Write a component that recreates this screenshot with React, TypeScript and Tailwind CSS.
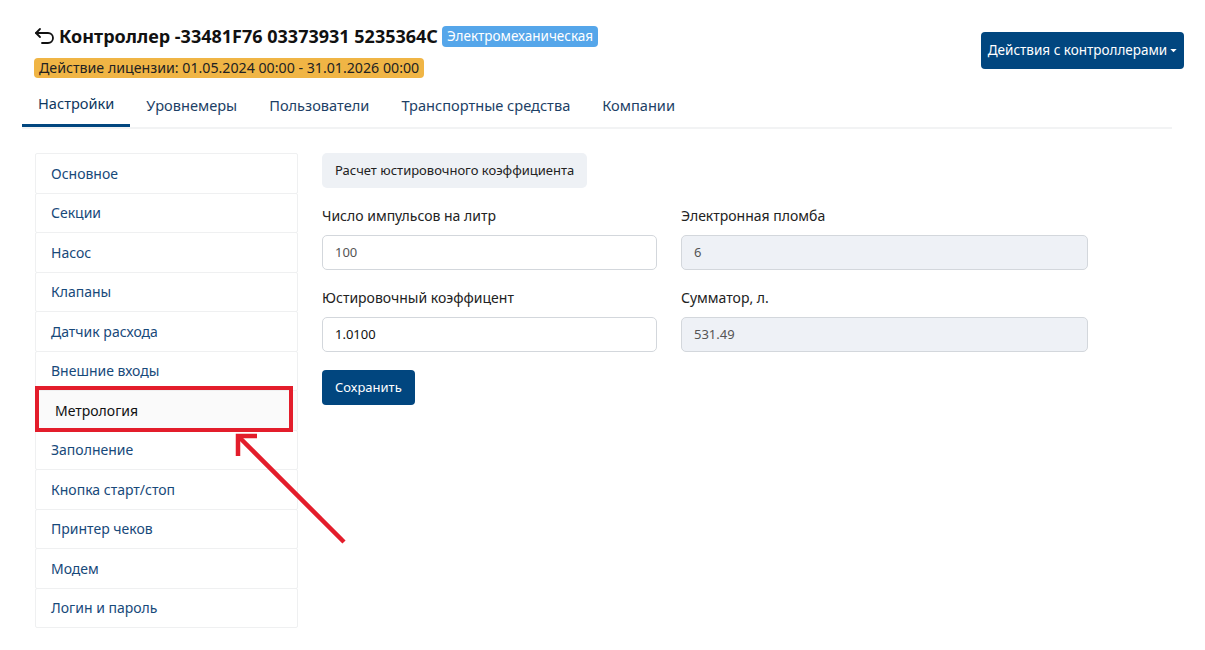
const menu = [
  "Основное",
  "Секции",
  "Насос",
  "Клапаны",
  "Датчик расхода",
  "Внешние входы",
  "Метрология",
  "Заполнение",
  "Кнопка старт/стоп",
  "Принтер чеков",
  "Модем",
  "Логин и пароль",
];

const tabs = ["Настройки", "Уровнемеры", "Пользователи", "Транспортные средства", "Компании"];

function BackArrow() {
  return (
    <svg width="22" height="20" viewBox="0 0 22 20" fill="none" stroke="#111" strokeWidth="1.8" strokeLinecap="round" strokeLinejoin="round">
      <path d="M6 3 L2 7 L6 11" />
      <path d="M2 7 H14 a5 5 0 0 1 0 10 H8" />
    </svg>
  );
}

function Field({ label, value, disabled, dark }: { label: string; value: string; disabled?: boolean; dark?: boolean }) {
  return (
    <div className="flex flex-col">
      <label className="text-[14px] text-[#222] h-[20px] leading-[20px]">{label}</label>
      <div
        className={`mt-[9px] h-[35px] rounded-[5px] border border-[#d3d7dc] flex items-center px-[12px] text-[13px] ${
          disabled ? "bg-[#eef1f6]" : "bg-white"
        } ${dark ? "text-[#111]" : "text-[#555]"}`}
      >
        {value}
      </div>
    </div>
  );
}

export default function App() {
  return (
    <div className="relative w-[1205px] h-[650px] overflow-hidden bg-white font-['Noto_Sans',sans-serif]">
      <header className="flex justify-between pl-[34px] pr-[21px] pt-[24px]">
        <div className="flex flex-col items-start">
          <div className="flex items-center h-[24px]">
            <BackArrow />
            <h1 className="ml-[3px] text-[18px] font-bold text-[#111]">
              Контроллер -33481F76 03373931 5235364C
            </h1>
            <span className="ml-[4px] rounded-[4px] bg-[#55a6ea] px-[5px] h-[21px] leading-[21px] text-[13.5px] text-white">
              Электромеханическая
            </span>
          </div>
          <span className="mt-[10px] rounded-[4px] bg-[#f0b545] px-[5px] h-[20px] leading-[20px] text-[14.2px] text-[#222]">
            Действие лицензии: 01.05.2024 00:00 - 31.01.2026 00:00
          </span>
        </div>
        <button className="mt-[8px] h-[37px] w-[203px] rounded-[4px] bg-[#01467f] text-white text-[13.5px] flex items-center justify-center gap-[3px]">
          Действия с контроллерами
          <svg width="7" height="4" viewBox="0 0 8 5"><path d="M0 0 H8 L4 4 Z" fill="white" /></svg>
        </button>
      </header>

      <nav className="ml-[22px] mr-[33px] mt-[9px] flex border-b-2 border-[#f2f3f4]">
        {tabs.map((t, i) => (
          <div
            key={t}
            className={`px-[16px] h-[40px] pb-[3px] flex items-center text-[14.6px] ${
              i === 0 ? "border-b-[3px] border-[#01467f] -mb-[2px] text-[#0e3760]" : "text-[#1d3f66]"
            }`}
          >
            {t}
          </div>
        ))}
      </nav>

      <div className="flex pl-[35px] mt-[24px] gap-[24px]">
        <aside className="w-[263px] flex flex-col">
          {menu.map((m, i) => (
            <div
              key={m}
              className={`h-[40.5px] -mt-px first:mt-0 border border-[#eff0f1] rounded-[2px] flex items-center text-[14px] ${
                i === 6 ? "bg-[#fafafa] text-[#111] border-l-4 border-l-[#01467f] pl-[16px]" : "bg-white text-[#17497a] pl-[15px]"
              }`}
            >
              {m}
            </div>
          ))}
        </aside>

        <main className="flex flex-col items-start">
          <div className="h-[35px] px-[13px] rounded-[5px] bg-[#eef1f5] flex items-center text-[13px] text-[#222]">
            Расчет юстировочного коэффициента
          </div>
          <div className="mt-[18px] grid grid-cols-[335px_407px] gap-x-[24px] gap-y-[18px]">
            <Field label="Число импульсов на литр" value="100" />
            <Field label="Электронная пломба" value="6" disabled />
            <Field label="Юстировочный коэффицент" value="1.0100" dark />
            <Field label="Сумматор, л." value="531.49" disabled />
          </div>
          <button className="mt-[18px] h-[35px] px-[13px] rounded-[4px] bg-[#01467f] text-white text-[13px]">
            Сохранить
          </button>
        </main>
      </div>

      {/* аннотация: рамка и стрелка */}
      <div className="absolute left-[35px] top-[386px] w-[258px] h-[46px] border-4 border-[#e31d2b]" />
      <svg className="absolute left-0 top-0 pointer-events-none" width="1205" height="650">
        <g stroke="#e31d2b" strokeWidth="4.5" fill="none" strokeLinecap="butt">
          <path d="M344 542 L239 437" />
          <path d="M238 456 V436 H257" />
        </g>
      </svg>
    </div>
  );
}
